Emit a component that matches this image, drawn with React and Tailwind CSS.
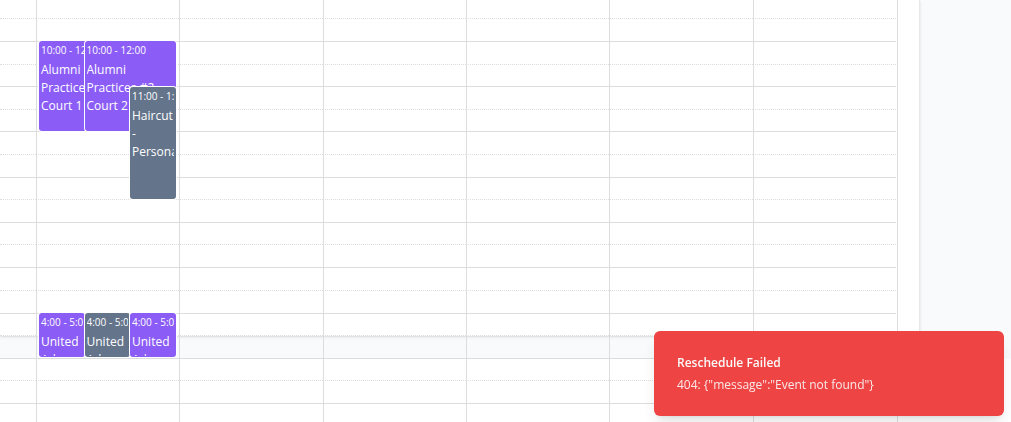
const slots = [
  'h-[23px]', 'h-[23px]', 'h-[22px]', 'h-[23px]', 'h-[22px]', 'h-[23px]',
  'h-[23px]', 'h-[22px]', 'h-[23px]', 'h-[22px]', 'h-[23px]', 'h-[23px]',
  'h-[23px]', 'h-[22px]', 'h-[23px]', 'h-[22px]', 'h-[23px]', 'h-[23px]',
];

const days = [0, 1, 2, 3, 4, 5];

const events = [
  { time: '10:00 - 12:00', lines: ['Alumni', 'Practices #1', 'Court 1'], box: 'top-[41px] h-[90px] left-0 w-2/3 bg-[#8b5cf6]' },
  { time: '10:00 - 12:00', lines: ['Alumni', 'Practices #2', 'Court 2'], box: 'top-[41px] h-[90px] left-1/3 w-2/3 bg-[#8b5cf6]' },
  { time: '11:00 - 1:30', lines: ['Haircut', '-', 'Personal'], box: 'top-[87px] h-[112px] left-2/3 w-1/3 bg-[#64748b]' },
  { time: '4:00 - 5:00', lines: ['United', 'Adv'], box: 'top-[313px] h-[44px] left-0 w-1/3 bg-[#8b5cf6]' },
  { time: '4:00 - 5:00', lines: ['United', 'Adv'], box: 'top-[313px] h-[44px] left-1/3 w-1/3 bg-[#64748b]' },
  { time: '4:00 - 5:00', lines: ['United', 'Adv'], box: 'top-[313px] h-[44px] left-2/3 w-1/3 bg-[#8b5cf6]' },
];

function Event({ event }) {
  return (
    <a
      href="#event"
      className={`absolute overflow-hidden rounded-[3px] px-0.5 pt-0.5 pb-px text-white shadow-[0_0_0_1px_#fff] ${event.box}`}
    >
      <div className="h-full overflow-hidden whitespace-nowrap">
        <div className="mb-[3px] text-[10px] leading-[15px]">{event.time}</div>
        <div className="text-[12px] leading-[18px]">
          {event.lines.map((line) => (
            <div key={line}>{line}</div>
          ))}
        </div>
      </div>
    </a>
  );
}

function WeekGrid() {
  return (
    <div className="relative mr-[21px] border-r border-[#ddd] pr-px">
      <div className="grid h-[18px] grid-cols-[36px_repeat(6,minmax(0,1fr))]">
        <div />
        {days.map((d) => (
          <div key={d} className="border-l border-[#ddd]" />
        ))}
      </div>
      {slots.map((height, i) => (
        <div key={i} className={`grid grid-cols-[36px_repeat(6,minmax(0,1fr))] ${height}`}>
          <div className={`border-t border-[#ddd] ${i % 2 ? '' : '[border-top-style:dotted]'}`} />
          {days.map((d) => (
            <div
              key={d}
              className={`border-t border-l border-[#ddd] ${i % 2 ? '' : '[border-top-style:dotted]'}`}
            />
          ))}
        </div>
      ))}
      <div className="absolute inset-0 grid grid-cols-[36px_repeat(6,minmax(0,1fr))]">
        <div className="relative col-start-2 mr-1 ml-[3px]">
          {events.map((event, i) => (
            <Event key={i} event={event} />
          ))}
        </div>
      </div>
    </div>
  );
}

export default function App() {
  return (
    <div className="h-screen overflow-hidden bg-white font-['Open_Sans','Noto_Sans',sans-serif]">
      <main className="h-[359px] bg-[#f9fafb] pr-[91px]">
        <section className="h-[336px] border-r border-[#e5e7eb] bg-white shadow-sm">
          <WeekGrid />
        </section>
      </main>
      <div
        role="alert"
        className="fixed right-[7px] bottom-[6px] flex w-[350px] flex-col gap-0.5 rounded-md bg-[#ef4444] px-[23px] pt-[22px] pb-[21px] text-[#fafafa] shadow-lg"
      >
        <div className="text-[12px] leading-5 font-semibold">Reschedule Failed</div>
        <div className="text-[12px] leading-5 opacity-90">404: {'{"message":"Event not found"}'}</div>
      </div>
    </div>
  );
}
